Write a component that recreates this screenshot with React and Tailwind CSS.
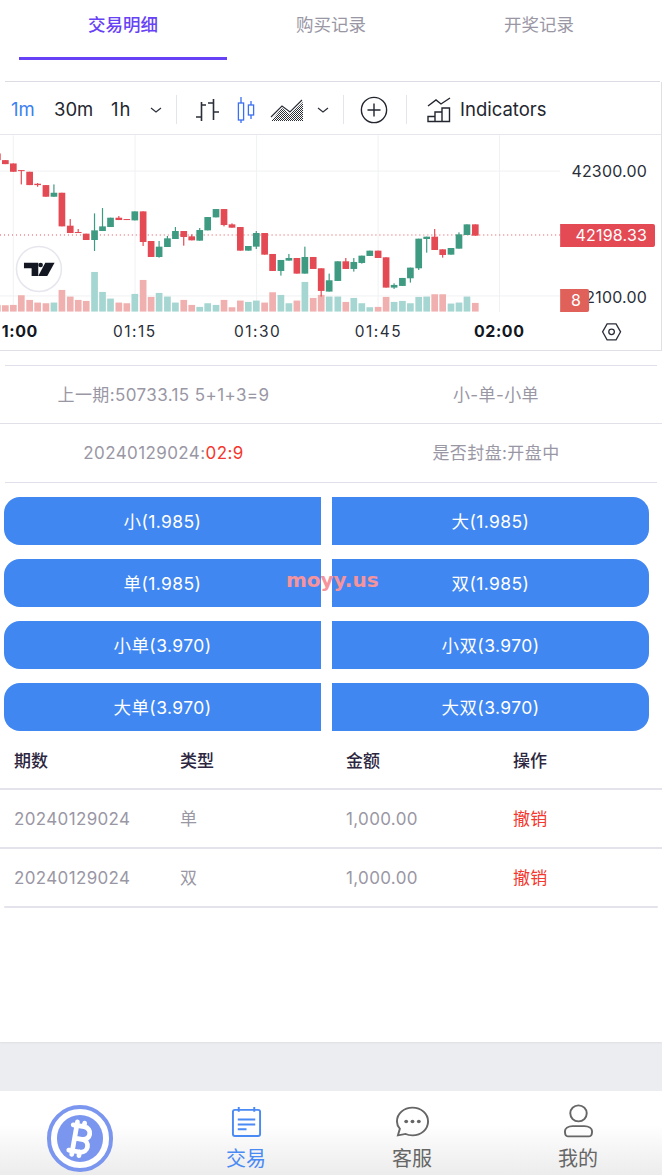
import React from 'react'
import { Bitcoin } from 'lucide-react'

// candles measured in 3x chart coordinates: x, bodyTop, bodyBottom, wickTop, wickBottom, up?
const candles = [
  [-8, 55, 75, 55, 75, 0], [16, 75, 87, 75, 87, 0], [40, 85, 110, 85, 110, 0], [64, 105, 108, 105, 148, 0],
  [89, 110, 150, 110, 150, 0], [113, 146, 150, 144, 155, 0], [138, 150, 185, 150, 185, 0], [162, 173, 185, 148, 185, 1],
  [186, 173, 274, 173, 274, 0], [211, 272, 294, 252, 294, 0], [235, 291, 294, 282, 294, 0], [259, 296, 315, 296, 315, 0],
  [284, 286, 315, 235, 348, 1], [308, 274, 288, 219, 288, 1], [332, 248, 276, 248, 276, 1], [357, 248, 255, 243, 255, 0],
  [381, 252, 255, 252, 255, 0], [405, 229, 256, 229, 256, 1], [430, 229, 321, 229, 333, 0], [454, 318, 366, 318, 366, 0],
  [478, 335, 366, 318, 368, 1], [503, 310, 336, 303, 336, 1], [527, 288, 312, 276, 312, 1], [552, 288, 306, 288, 332, 0],
  [576, 304, 316, 298, 316, 0], [600, 285, 317, 279, 317, 1], [624, 246, 286, 246, 286, 1], [649, 222, 247, 222, 247, 1],
  [673, 222, 270, 222, 274, 0], [697, 268, 278, 265, 278, 0], [722, 276, 347, 276, 347, 0], [746, 333, 347, 333, 347, 1],
  [770, 294, 335, 288, 342, 1], [795, 294, 359, 294, 359, 0], [819, 357, 408, 357, 408, 0], [844, 375, 408, 375, 422, 1],
  [868, 369, 377, 357, 377, 1], [892, 369, 416, 369, 416, 0], [916, 366, 416, 335, 416, 1], [941, 366, 402, 366, 402, 0],
  [965, 400, 468, 400, 485, 0], [989, 436, 470, 416, 470, 1], [1015, 379, 438, 379, 438, 1], [1039, 379, 402, 369, 402, 0],
  [1063, 381, 402, 369, 410, 1], [1087, 362, 384, 362, 386, 1], [1111, 347, 363, 347, 363, 1], [1136, 347, 369, 347, 369, 0],
  [1160, 367, 458, 367, 458, 0], [1184, 450, 458, 445, 462, 1], [1209, 429, 453, 429, 453, 1], [1233, 398, 430, 398, 443, 1],
  [1258, 311, 400, 311, 405, 1], [1282, 305, 312, 305, 353, 1], [1306, 305, 345, 282, 345, 0], [1330, 343, 360, 343, 368, 0],
  [1355, 339, 359, 339, 359, 1], [1379, 298, 341, 292, 341, 1], [1403, 268, 300, 268, 300, 1], [1428, 268, 302, 268, 302, 0],
]

// top of each volume bar, same order as candles
const volumes = [
  510, 511, 510, 481, 495, 503, 505, 503, 465, 485, 495, 498, 411, 471, 491, 503, 505, 477, 435, 486,
  474, 485, 503, 495, 510, 516, 505, 510, 495, 517, 497, 501, 497, 503, 472, 480, 505, 497, 441, 489,
  480, 485, 485, 501, 489, 505, 517, 516, 486, 501, 498, 505, 486, 485, 478, 478, 506, 503, 485, 504,
]

const RED = '#e34a54'
const GREEN = '#3f9a82'

const bets = [
  ['小(1.985)', '大(1.985)'],
  ['单(1.985)', '双(1.985)'],
  ['小单(3.970)', '小双(3.970)'],
  ['大单(3.970)', '大双(3.970)'],
]

const orders = [
  ['20240129024', '单', '1,000.00'],
  ['20240129024', '双', '1,000.00'],
]

const Chevron = ({ className }) => (
  <svg viewBox="0 0 12 6" className={`h-[6px] w-[12px] ${className}`} fill="none" stroke="#2a2e39" strokeWidth="1.2">
    <path d="M1 1l5 4 5-4" />
  </svg>
)

const Divider = ({ className }) => <div className={`h-[29px] w-px bg-[#e4e5ea] ${className}`} />

const Toolbar = () => (
  <div className="flex h-[53px] items-center border-b border-[#e6e6ec] pt-[3px] pl-[11px] text-[18.5px] text-[#23262f]">
    <span className="w-[25px] text-[#3b7ff0]">1m</span>
    <span className="ml-[18px] w-[39px]">30m</span>
    <span className="ml-[18px] w-[19px] tracking-[1px]">1h</span>
    <Chevron className="ml-[20px]" />
    <Divider className="ml-[14px]" />
    <svg viewBox="0 0 24 26" className="ml-[18px] h-[26px] w-[24px]" fill="none" stroke="#2a2e39" strokeWidth="1.6">
      <path d="M6.5 5v19M1 20h5.500M6.500 8H11M18.500 2v21M13 6h5.500M18.500 15H24" />
    </svg>
    <svg viewBox="0 0 20 28" className="ml-[17px] h-[28px] w-[20px]" fill="none" stroke="#3b6ff0" strokeWidth="1.3">
      <path d="M5 1v6M5 24v3M15 5v4M15 19v4" />
      <rect x="2.4" y="7" width="5.2" height="17" />
      <rect x="12.4" y="9" width="5.2" height="10" />
    </svg>
    <svg viewBox="0 0 34 24" className="ml-[14px] h-[24px] w-[34px]">
      <defs>
        <pattern id="dots" width="2" height="2" patternUnits="userSpaceOnUse">
          <rect width="1" height="1" fill="#2a2e39" />
          <rect x="1" y="1" width="1" height="1" fill="#2a2e39" />
        </pattern>
      </defs>
      <path d="M1 23L12 10l8 6L33 4v19z" fill="url(#dots)" />
      <path d="M1 19L12 8l8 6L32 2" fill="none" stroke="#2a2e39" strokeWidth="1.2" />
    </svg>
    <Chevron className="ml-[13px]" />
    <Divider className="ml-[14px]" />
    <svg viewBox="0 0 28 28" className="ml-[16px] h-[28px] w-[28px]" fill="none" stroke="#23262f" strokeWidth="1.4">
      <circle cx="14" cy="14" r="12.6" />
      <path d="M14 7.500v13M7.500 14h13" />
    </svg>
    <Divider className="ml-[18px]" />
    <svg viewBox="0 0 26 26" className="ml-[19px] h-[26px] w-[26px]" fill="none" stroke="#23262f" strokeWidth="1.4">
      <path d="M2 9l8-6 5 4 9-6" />
      <path d="M2 24.500v-5h7v5zM9 24.500V15h7v9.500zM16 24.500V11h7.500v13.500z" />
    </svg>
    <span className="ml-[8px]">Indicators</span>
  </div>
)

const Chart = () => (
  <svg viewBox="0 0 662 215" className="block h-[215px] w-full font-['Inter',sans-serif]">
    {[13.3, 135.3, 257, 378.7, 500.3].map((x) => (
      <line key={x} x1={x} x2={x} y1="0" y2="177" stroke="#f0f1f2" />
    ))}
    {[36, 161].map((y) => (
      <line key={y} x1="0" x2="561" y1={y} y2={y} stroke="#f0f1f2" />
    ))}
    {volumes.map((top, i) => (
      <rect
        key={i}
        x={(candles[i][0] - 10) / 3}
        y={top / 3}
        width="6.7"
        height={(530 - top) / 3}
        fill={candles[i][5] ? '#a5d6d1' : '#f0b0af'}
      />
    ))}
    <line x1="0" x2="561" y1="100" y2="100" stroke={RED} strokeDasharray="1 3" />
    {candles.map(([x, top, bottom, wickTop, wickBottom, up]) => (
      <g key={x} fill={up ? GREEN : RED}>
        <rect x={x / 3 - 0.6} y={wickTop / 3} width="1.2" height={(wickBottom - wickTop) / 3} />
        <rect x={(x - 10) / 3} y={top / 3} width="6.7" height={(bottom - top) / 3} />
      </g>
    ))}

    <circle cx="39" cy="134" r="22.5" fill="#fff" stroke="#e6e6ee" strokeWidth="1.5" />
    <g transform="translate(10 105) scale(0.3333)" fill="#131722">
      <path d="M42 68h43v40H65V85H42z" />
      <circle cx="92" cy="75" r="7" />
      <path d="M106 68h28l-22 40H85z" />
    </g>

    <g fontSize="16" letterSpacing="0.2">
      <text x="648" y="42" textAnchor="end" fill="#2a2e39">42300.00</text>
      <text x="648" y="168" textAnchor="end" fill="#2a2e39">42100.00</text>
      <path d="M561 89h93a2 2 0 0 1 2 2v19a2 2 0 0 1-2 2h-93z" fill={RED} />
      <text x="648" y="106" textAnchor="end" fill="#fff">42198.33</text>
      <path d="M561 154h27a2 2 0 0 1 2 2v19a2 2 0 0 1-2 2h-27z" fill="#e0605a" />
      <text x="577" y="171" textAnchor="middle" fill="#fff">8</text>
    </g>

    <g fontSize="15.5" fill="#2a2e39" letterSpacing="1.5" textAnchor="middle">
      <text x="135" y="202">01:15</text>
      <text x="258" y="202">01:30</text>
      <text x="379" y="202">01:45</text>
    </g>
    <g fontSize="16" fontWeight="700" fill="#131722" letterSpacing="0.6">
      <text x="38" y="202" textAnchor="end">1:00</text>
      <text x="500" y="202" textAnchor="middle">02:00</text>
    </g>

    <g fill="none" stroke="#2a2e39" strokeWidth="1.3">
      <path d="M603.5 197l4.500-8h9l4.500 8-4.500 8h-9z" />
      <circle cx="612.5" cy="197" r="2.8" />
    </g>
  </svg>
)

const NavItem = ({ label, active, children }) => (
  <div className={`flex w-[166px] flex-col items-center ${active ? 'text-[#4a8af4]' : 'text-[#666]'}`}>
    <div className="flex h-[34px] items-center justify-center">{children}</div>
    <span className="mt-[6px] text-[20px] leading-[30px]">{label}</span>
  </div>
)

export default function App() {
  return (
    <div className="relative flex h-screen flex-col overflow-hidden bg-[#ecedf1] font-['Inter','Noto_Sans_CJK_SC',sans-serif]">
      <div className="h-[1042px] bg-white shadow-[0_1px_2px_rgba(0,0,0,0.06)]">
        {/* tabs */}
        <div className="flex h-[60px] pl-[19px] text-[17.5px]">
          <div className="flex w-[208px] justify-center border-b-[3px] border-[#6741f5] pt-[12px] font-medium text-[#6741f5]">交易明细</div>
          <div className="flex w-[208px] justify-center pt-[12px] text-[#9a97a5]">购买记录</div>
          <div className="flex w-[208px] justify-center pt-[12px] text-[#9a97a5]">开奖记录</div>
        </div>

        {/* chart */}
        <div className="mt-[21px] ml-[5px] mr-[2px] border-t border-[#dcdce4]" />
        <div className="h-[269px] overflow-hidden border-r border-b border-[#dfdfe6]">
          <Toolbar />
          <Chart />
        </div>

        {/* draw info */}
        <div className="mt-[14px] mx-[5px] border-t border-[#e0dfea]" />
        <div className="flex h-[57px] items-center pt-[2px] text-[17px] tracking-[0.4px] text-[#9a97a5]">
          <div className="w-[327px] text-center">上一期:50733.15 5+1+3=9</div>
          <div className="w-[335px] pl-[3px] text-center">小-单-小单</div>
        </div>
        <div className="border-t border-[#e0dfea]" />
        <div className="flex h-[58px] items-center pt-[2px] text-[17px] tracking-[0.4px] text-[#9a97a5]">
          <div className="w-[327px] text-center">
            20240129024:<span className="text-[#f5372e]">02:9</span>
          </div>
          <div className="w-[335px] pl-[3px] text-center">是否封盘:开盘中</div>
        </div>
        <div className="mx-[5px] border-t border-[#e0dfea]" />

        {/* bet buttons */}
        <div className="mt-[14px] flex flex-col gap-[14px] pl-[4px]">
          {bets.map(([left, right]) => (
            <div key={left} className="flex gap-[11px] text-[17.5px] tracking-[0.4px] text-white">
              <button className="h-[48px] w-[317px] rounded-l-2xl bg-[#4187f1] pt-[2px]">{left}</button>
              <button className="h-[48px] w-[317px] rounded-r-2xl bg-[#4187f1] pt-[2px]">{right}</button>
            </div>
          ))}
        </div>

        {/* orders */}
        <div className="grid h-[57px] grid-cols-[166px_166px_167px_1fr] items-center pt-[5px] pl-[14px] text-[17px] font-medium text-[#2c2640]">
          <span>期数</span>
          <span>类型</span>
          <span>金额</span>
          <span>操作</span>
        </div>
        {orders.map(([no, type, amount], i) => (
          <div key={i} className="grid h-[59px] grid-cols-[166px_166px_167px_1fr] items-center border-t-2 border-[#e4e3ec] pt-[2px] pl-[14px] text-[17px] tracking-[0.35px] text-[#9a97a5]">
            <span>{no}</span>
            <span>{type}</span>
            <span>{amount}</span>
            <span className="text-[#f5372e]">撤销</span>
          </div>
        ))}
        <div className="mx-[4px] h-[2px] rounded-full bg-[#e4e3ec]" />
      </div>

      {/* bottom nav */}
      <div className="mt-auto flex h-[84px] bg-gradient-to-b from-white from-40% to-[#ececec]">
        <div className="flex w-[160px] justify-center pt-[14px]">
          <div className="flex h-[67px] w-[66px] items-center justify-center rounded-full border-4 border-[#7a96ef] bg-white">
            <div className="flex h-[47px] w-[46px] items-center justify-center rounded-full bg-[#7a96ef]">
              <Bitcoin size={44} color="#fff" strokeWidth={2.6} />
            </div>
          </div>
        </div>
        <div className="flex pt-[13px] pl-[3px]">
          <NavItem label="交易" active>
            <svg viewBox="0 0 32 32" className="h-[31px] w-[31px]" fill="none" stroke="currentColor" strokeWidth="2">
              <rect x="2" y="4" width="28" height="27" rx="2" />
              <path d="M8 1v5M24 1v5M7 14h18M7 19h18M7 24h9" />
            </svg>
          </NavItem>
          <NavItem label="客服">
            <svg viewBox="0 0 36 36" preserveAspectRatio="none" className="h-[31px] w-[35px]" fill="none" stroke="currentColor" strokeWidth="2">
              <path d="M18 2c9 0 16 7 16 16s-7 16-16 16c-3 0-5.500-.7-7-1.500L3 34l2-7.500C3 24 2 21 2 18 2 9 9 2 18 2z" />
              <circle cx="11.500" cy="18" r="2" fill="currentColor" stroke="none" />
              <circle cx="18" cy="18" r="2" fill="currentColor" stroke="none" />
              <circle cx="24.500" cy="18" r="2" fill="currentColor" stroke="none" />
            </svg>
          </NavItem>
          <NavItem label="我的">
            <svg viewBox="0 0 32 40" preserveAspectRatio="none" className="h-[34px] w-[31px]" fill="none" stroke="currentColor" strokeWidth="2">
              <ellipse cx="16" cy="11" rx="8.500" ry="9.500" />
              <path d="M10 26h12c5 0 8 3 8 6s-1 6-3 6H5c-2 0-3-3-3-6s3-6 8-6z" />
            </svg>
          </NavItem>
        </div>
      </div>

      {/* watermark */}
      <span className="absolute top-[566px] left-[286px] font-['DejaVu_Sans',sans-serif] text-[20px] leading-[28px] font-bold text-[#f7939b]">moyy.us</span>
    </div>
  )
}
